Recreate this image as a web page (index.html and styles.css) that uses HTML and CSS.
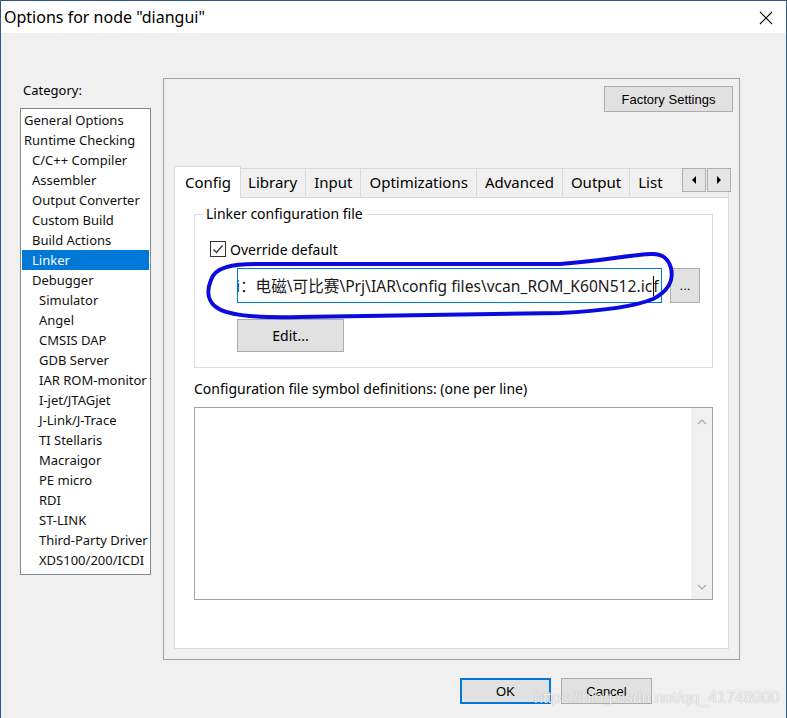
FILE: index.html
```html
<!DOCTYPE html>
<html lang="en">
<head>
    <meta charset="UTF-8">
    <title>Options for node "diangui"</title>
    <link rel="stylesheet" href="styles.css">
</head>
<body>
    <div class="window">
        <div class="titlebar">
            <span class="title">Options for node "diangui"</span>
            <svg class="close" width="14" height="14" viewBox="0 0 14 14">
                <path d="M1 1 L13 13 M13 1 L1 13" stroke="#000" stroke-width="1.1" fill="none"/>
            </svg>
        </div>

        <div class="main">
            <div class="side">
                <div class="side-label">Category:</div>
                <div class="cat-list">
                    <div class="cat-item">General Options</div>
                    <div class="cat-item">Runtime Checking</div>
                    <div class="cat-item lvl1">C/C++ Compiler</div>
                    <div class="cat-item lvl1">Assembler</div>
                    <div class="cat-item lvl1">Output Converter</div>
                    <div class="cat-item lvl1">Custom Build</div>
                    <div class="cat-item lvl1">Build Actions</div>
                    <div class="cat-item lvl1 active">Linker</div>
                    <div class="cat-item lvl1">Debugger</div>
                    <div class="cat-item lvl2">Simulator</div>
                    <div class="cat-item lvl2">Angel</div>
                    <div class="cat-item lvl2">CMSIS DAP</div>
                    <div class="cat-item lvl2">GDB Server</div>
                    <div class="cat-item lvl2">IAR ROM-monitor</div>
                    <div class="cat-item lvl2">I-jet/JTAGjet</div>
                    <div class="cat-item lvl2">J-Link/J-Trace</div>
                    <div class="cat-item lvl2">TI Stellaris</div>
                    <div class="cat-item lvl2">Macraigor</div>
                    <div class="cat-item lvl2">PE micro</div>
                    <div class="cat-item lvl2">RDI</div>
                    <div class="cat-item lvl2">ST-LINK</div>
                    <div class="cat-item lvl2">Third-Party Driver</div>
                    <div class="cat-item lvl2">XDS100/200/ICDI</div>
                </div>
            </div>

            <div class="panel">
                <div class="panel-top">
                    <button class="btn factory">Factory Settings</button>
                </div>

                <div class="tabs">
                    <div class="tab selected">Config</div>
                    <div class="tab">Library</div>
                    <div class="tab">Input</div>
                    <div class="tab">Optimizations</div>
                    <div class="tab">Advanced</div>
                    <div class="tab">Output</div>
                    <div class="tab tab-last">List</div>
                    <div class="tab-scroll">
                        <span class="scroll-btn">
                            <svg width="6" height="8" viewBox="0 0 6 8"><polygon points="5,0 5,8 1,4" fill="#000"/></svg>
                        </span>
                        <span class="scroll-btn">
                            <svg width="6" height="8" viewBox="0 0 6 8"><polygon points="1,0 1,8 5,4" fill="#000"/></svg>
                        </span>
                    </div>
                </div>

                <div class="pane">
                    <fieldset class="group">
                        <legend>Linker configuration file</legend>
                        <div class="check-row">
                            <span class="checkbox">
                                <svg width="14" height="14" viewBox="0 0 14 14">
                                    <path d="M2.5 7.5 L5.5 10.5 L11.5 3.5" stroke="#333" stroke-width="1.3" fill="none"/>
                                </svg>
                            </span>
                            <span>Override default</span>
                        </div>
                        <div class="file-row">
                            <div class="file-input">
                                <span class="path">i：电磁\可比赛\Prj\IAR\config files\vcan_ROM_K60N512.ic</span><span class="caret"></span><span class="tail">f</span>
                            </div>
                            <button class="btn browse">...</button>
                        </div>
                        <button class="btn edit">Edit...</button>
                    </fieldset>

                    <div class="defs-label">Configuration file symbol definitions: (one per line)</div>
                    <div class="defs">
                        <div class="vscroll">
                            <svg width="10" height="6" viewBox="0 0 10 6"><path d="M1 5 L5 1 L9 5" stroke="#a6a6a6" stroke-width="1.2" fill="none"/></svg>
                            <svg width="10" height="6" viewBox="0 0 10 6"><path d="M1 1 L5 5 L9 1" stroke="#a6a6a6" stroke-width="1.2" fill="none"/></svg>
                        </div>
                    </div>
                </div>
            </div>
        </div>

        <div class="footer">
            <button class="btn dlg default">OK</button>
            <button class="btn dlg">Cancel</button>
        </div>

        <!-- hand-drawn marker over the path field -->
        <svg class="marker" width="787" height="718" viewBox="0 0 787 718">
            <path d="M258 264 C232 264 215 267 211 280 C206 292 208 303 219 309 C232 316 262 318 300 317 L560 313 C600 311 636 306 653 299 C667 292 674 281 671 268 C668 258 662 253 650 254 C622 256 600 261 560 264 L258 264"
                  stroke="#0b0be0" stroke-width="4" fill="none" stroke-linejoin="round"/>
        </svg>

        <div class="watermark">https://blog.csdn.net/qq_41748900</div>
    </div>
</body>
</html>
```

FILE: styles.css
```css
body {
    margin: 0;
    padding: 0;
    background: #f0f0f0;
}
.window {
    width: 787px;
    height: 718px;
    box-sizing: border-box;
    border: 1px solid #2b5a87;
    border-bottom: none;
    background: #f0f0f0;
    position: relative;
    overflow: hidden;
    font-family: "Noto Sans", "Noto Sans CJK SC", sans-serif;
    font-size: 14px;
    color: #000;
}
.titlebar {
    height: 32px;
    background: #fff;
    display: flex;
    align-items: center;
    justify-content: space-between;
    padding-left: 3px;
    padding-right: 13px;
    font-size: 16px;
}
.close {
    margin-top: 1px;
}
.main {
    display: flex;
    padding-top: 45px;
}
.side {
    width: 131px;
    margin-left: 19px;
    margin-right: 12px;
    padding-top: 2px;
}
.side-label {
    line-height: 20px;
    padding-left: 3px;
    margin-bottom: 8px;
    font-size: 13px;
}
.cat-list {
    height: 467px;
    box-sizing: border-box;
    border: 1px solid #828790;
    background: #fff;
    padding: 1px;
    font-size: 13px;
    color: #111;
}
.cat-item {
    height: 20px;
    line-height: 20px;
    padding-left: 2px;
    white-space: nowrap;
}
.cat-item.lvl1 {
    padding-left: 10px;
}
.cat-item.lvl2 {
    padding-left: 17px;
}
.cat-item.active {
    background: #0078d7;
    color: #fff;
}
.panel {
    width: 577px;
    height: 582px;
    box-sizing: border-box;
    border: 1px solid #a0a0a0;
    padding: 0 10px 10px;
    display: flex;
    flex-direction: column;
}
.panel-top {
    height: 87px;
    box-sizing: border-box;
    padding-top: 7px;
    margin-right: -4px;
    display: flex;
    justify-content: flex-end;
    align-items: flex-start;
}
.btn {
    font-family: "Liberation Sans", Arial, sans-serif;
    font-size: 13px;
    color: #000;
    background: #e1e1e1;
    border: 1px solid #adadad;
    padding: 0;
    margin: 0;
}
.factory {
    width: 129px;
    height: 26px;
}
.tabs {
    height: 31px;
    display: flex;
    align-items: flex-end;
    position: relative;
    font-size: 15px;
}
.tab {
    height: 29px;
    box-sizing: border-box;
    line-height: 27px;
    padding: 0 8px;
    border: 1px solid #d9d9d9;
    border-bottom: none;
    margin-left: -1px;
    background: #f0f0f0;
    white-space: nowrap;
}
.tab.selected {
    height: 32px;
    line-height: 30px;
    margin-bottom: -1px;
    margin-left: 0;
    margin-right: -1px;
    padding: 0 9px 0 10px;
    background: #fff;
    position: relative;
    z-index: 1;
}
.tab-last {
    flex: 1;
}
.tab-scroll {
    position: absolute;
    right: -2px;
    top: 2px;
    display: flex;
}
.scroll-btn {
    width: 24px;
    height: 24px;
    box-sizing: border-box;
    border: 1px solid #adadad;
    background: #e5e5e5;
    display: flex;
    align-items: center;
    justify-content: center;
}
.scroll-btn + .scroll-btn {
    margin-left: 1px;
}
.pane {
    flex: 1;
    background: #fff;
    border: 1px solid #d9d9d9;
    padding: 7px 15px 0 19px;
}
.group {
    margin: 0;
    min-width: 0;
    border: 1px solid #dcdcdc;
    padding: 0 10px 15px 15px;
}
.group legend {
    padding: 0 3px;
    margin-left: -7px;
    line-height: 18px;
}
.check-row {
    display: flex;
    align-items: center;
    gap: 4px;
    height: 20px;
    margin-top: 16px;
}
.checkbox {
    width: 16px;
    height: 16px;
    box-sizing: border-box;
    border: 1px solid #333;
    background: #fff;
    display: flex;
    align-items: center;
    justify-content: center;
}
.file-row {
    display: flex;
    gap: 8px;
    margin-top: 9px;
    padding-left: 27px;
}
.file-input {
    width: 425px;
    height: 35px;
    box-sizing: border-box;
    border: 1px solid #0078d7;
    background: #fff;
    display: flex;
    align-items: center;
    overflow: hidden;
    white-space: nowrap;
    font-family: "Noto Sans", "Noto Sans CJK SC", sans-serif;
    font-size: 15.6px;
    color: #1a1a1a;
}
.path {
    flex: none;
    margin-left: -2px;
}
.caret {
    display: inline-block;
    flex: none;
    width: 1px;
    height: 20px;
    background: #000;
    margin-left: 1px;
}
.tail {
    flex: none;
    margin-left: -1px;
}
.browse {
    width: 30px;
    height: 35px;
    line-height: 30px;
}
.edit {
    display: block;
    width: 107px;
    height: 33px;
    margin-top: 16px;
    margin-left: 27px;
    font-family: "Noto Sans", sans-serif;
    font-size: 14px;
}
.defs-label {
    margin-top: 11px;
    line-height: 20px;
}
.defs {
    margin-top: 8px;
    height: 193px;
    box-sizing: border-box;
    border: 1px solid #a0a0a0;
    background: #fff;
    display: flex;
    justify-content: flex-end;
}
.vscroll {
    width: 21px;
    background: #f0f0f0;
    display: flex;
    flex-direction: column;
    justify-content: space-between;
    align-items: center;
    padding: 11px 0 9px;
}
.footer {
    display: flex;
    justify-content: flex-end;
    gap: 10px;
    margin-top: 18px;
    padding-right: 134px;
}
.dlg {
    width: 91px;
    height: 26px;
}
.dlg.default {
    border: 2px solid #0078d7;
}
.marker {
    position: absolute;
    left: -1px;
    top: -1px;
    pointer-events: none;
}
.watermark {
    position: absolute;
    left: 533px;
    top: 687px;
    line-height: 20px;
    font-family: "Liberation Sans", Arial, sans-serif;
    font-size: 16px;
    color: rgba(255, 255, 255, 0.85);
    text-shadow: 0 0 1px rgba(0, 0, 0, 0.35);
    white-space: nowrap;
}
```
